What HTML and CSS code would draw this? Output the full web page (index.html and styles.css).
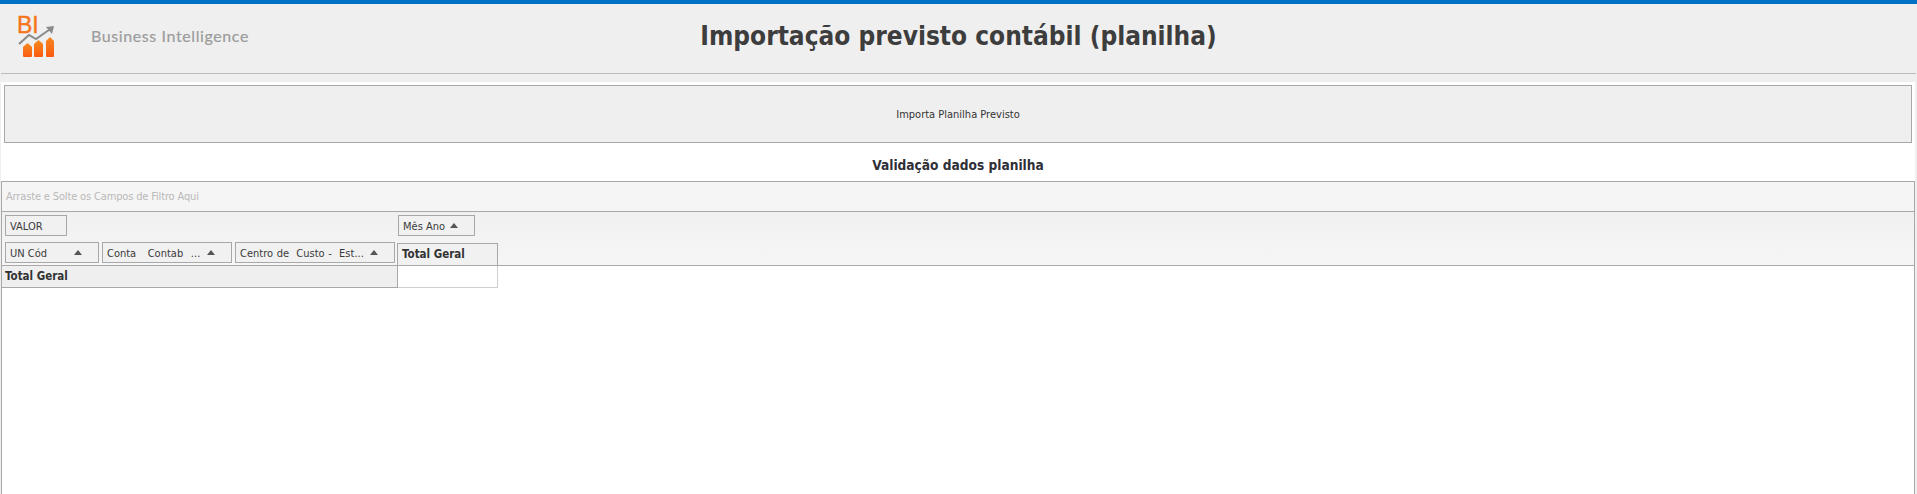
FILE: index.html
```html
<!DOCTYPE html>
<html lang="pt">
<head>
<meta charset="utf-8">
<title>Importação previsto contábil (planilha)</title>
<link rel="stylesheet" href="styles.css">
</head>
<body>
<header class="topbar">
  <div class="brand">
    <div class="logo">
      <span class="logo-bi">BI</span>
      <svg class="logo-art" width="40" height="46" viewBox="0 0 40 46">
        <defs>
          <linearGradient id="barfill" x1="0" y1="0" x2="0" y2="1">
            <stop offset="0" stop-color="#f58a1f"/>
            <stop offset="1" stop-color="#fb5a10"/>
          </linearGradient>
        </defs>
        <path d="M2 30 L12 21 L19 25 L29 18 L35 14" fill="none" stroke="#8a8a8a" stroke-width="2"/>
        <path d="M29 13 L37 12 L35 20 Z" fill="#8a8a8a"/>
        <path d="M6 33 L10.5 29 L15 33 V42 Q15 43 14 43 H7 Q6 43 6 42 Z" fill="url(#barfill)"/>
        <path d="M17 30 L21.5 26 L26 30 V42 Q26 43 25 43 H18 Q17 43 17 42 Z" fill="url(#barfill)"/>
        <path d="M29 27 L33 23 L37 27 V42 Q37 43 36 43 H30 Q29 43 29 42 Z" fill="url(#barfill)"/>
      </svg>
    </div>
    <span class="brand-name">Business Intelligence</span>
  </div>
  <h1 class="page-title">Importação previsto contábil (planilha)</h1>
</header>

<main class="content">
  <button class="import-btn" type="button">Importa Planilha Previsto</button>
  <h2 class="section-title">Validação dados planilha</h2>

  <section class="pivot">
    <div class="filter-area">Arraste e Solte os Campos de Filtro Aqui</div>

    <div class="pivot-head">
      <div class="head-rows">
        <div class="field-row data-row">
          <span class="field field-valor">VALOR</span>
        </div>
        <div class="field-row">
          <span class="field field-un"><span class="field-label">UN Cód</span><i class="sort"></i></span>
          <span class="field field-conta"><span class="field-label">Conta &nbsp; Contab &nbsp;...</span><i class="sort"></i></span>
          <span class="field field-centro"><span class="field-label">Centro de &nbsp;Custo - &nbsp;Est...</span><i class="sort"></i></span>
        </div>
      </div>
      <div class="head-cols">
        <span class="field field-mes"><span class="field-label">Mês Ano</span><i class="sort"></i></span>
        <div class="col-total">Total Geral</div>
      </div>
    </div>

    <div class="total-row">
      <div class="row-total">Total Geral</div>
      <div class="cell-total"></div>
    </div>
  </section>
</main>
</body>
</html>
```

FILE: styles.css
```css
* { box-sizing: border-box; }

html, body {
  margin: 0;
  height: 494px;
  overflow: hidden;
}

body {
  background: #efefef;
  border-top: 4px solid #0072c6;
  font-family: "DejaVu Sans Condensed", "DejaVu Sans", sans-serif;
  font-stretch: condensed;
  color: #333;
}

.topbar {
  height: 70px;
  margin: 0 1px;
  border-bottom: 1px solid #bcbcbc;
  position: relative;
}

.brand {
  position: absolute;
  left: 16px;
  top: 10px;
  display: flex;
  align-items: center;
}

.logo {
  position: relative;
  width: 40px;
  height: 46px;
}

.logo-bi {
  position: absolute;
  left: 0;
  top: -1px;
  font: 400 23px/24px "Liberation Sans", sans-serif;
  color: #f5761a;
  -webkit-text-stroke: 0.4px #f5761a;
}

.logo-art {
  position: absolute;
  left: 0;
  top: 0;
}

.brand-name {
  margin-left: 34px;
  margin-top: -2px;
  font: 400 16px/18px "Lato", sans-serif;
  letter-spacing: 0.6px;
  color: #9c9c9c;
  -webkit-text-stroke: 0.2px #9c9c9c;
}

.page-title {
  margin: 0;
  padding-top: 16px;
  text-align: center;
  font-family: "DejaVu Sans Condensed", "DejaVu Sans", sans-serif;
  font-weight: 700;
  font-stretch: condensed;
  font-size: 26px;
  line-height: 32px;
  color: #3d3d3d;
}

.content {
  margin: 8px 2px 0 1px;
  height: 412px;
  background: #fff;
  padding-top: 3px;
  overflow: hidden;
}

.import-btn {
  display: block;
  width: 1908px;
  height: 58px;
  margin: 0 0 0 3px;
  padding: 0;
  background: #efefef;
  border: 1px solid #a8a8a8;
  font-family: inherit;
  font-stretch: condensed;
  font-size: 11px;
  color: #333;
}

.section-title {
  margin: 0;
  height: 38px;
  padding-top: 13px;
  text-align: center;
  font-size: 13.6px;
  font-weight: 700;
  line-height: 18px;
  color: #2f2f38;
}

.pivot {
  height: 320px;
  border: 1px solid #a8a8a8;
  border-bottom: 0;
  background: #fff;
  font-size: 11px;
}

.filter-area {
  height: 30px;
  padding: 0 4px;
  border-bottom: 1px solid #a8a8a8;
  background: #f5f5f5;
  color: #b9b9b9;
  line-height: 29px;
  letter-spacing: -0.15px;
}

.pivot-head {
  display: flex;
  height: 54px;
  border-bottom: 1px solid #a8a8a8;
  background: linear-gradient(#f0f0f0, #f6f6f6);
}

.head-rows {
  width: 396px;
  padding: 3px 0 0 3px;
}

.field-row {
  display: flex;
  gap: 3px;
}

.data-row {
  height: 27px;
}

.field {
  display: flex;
  align-items: center;
  height: 21px;
  padding: 1px 4px 0;
  border: 1px solid #a8a8a8;
  background: #f1f1f1;
  color: #3a3a3a;
  white-space: nowrap;
}

.field-label {
  flex: 1;
}

.field-valor { width: 62px; }
.field-un { width: 94px; }
.field-conta { width: 130px; word-spacing: 0.7px; }
.field-centro { width: 160px; word-spacing: 0.5px; }
.field-mes { width: 77px; }

.sort {
  width: 0;
  height: 0;
  margin: -1px 12px 0 0;
  border-left: 4.5px solid transparent;
  border-right: 4.5px solid transparent;
  border-bottom: 5px solid #555;
}

.head-cols {
  width: 100px;
  padding-top: 3px;
  display: flex;
  flex-direction: column;
}

.col-total {
  flex: 1;
  width: 101px;
  margin: 7px 0 -1px -1px;
  padding: 3px 4px 0;
  border: 1px solid #a8a8a8;
  background: #f1f1f1;
  font-size: 11.5px;
  font-weight: 700;
}

.total-row {
  display: flex;
  height: 22px;
}

.row-total {
  width: 396px;
  padding: 3px 4px 0 3px;
  background: #efefef;
  border-bottom: 1px solid #a8a8a8;
  border-right: 1px solid #a8a8a8;
  font-size: 11.5px;
  font-weight: 700;
}

.cell-total {
  width: 100px;
  border-right: 1px solid #cfcfcf;
  border-bottom: 1px solid #cfcfcf;
}
```
